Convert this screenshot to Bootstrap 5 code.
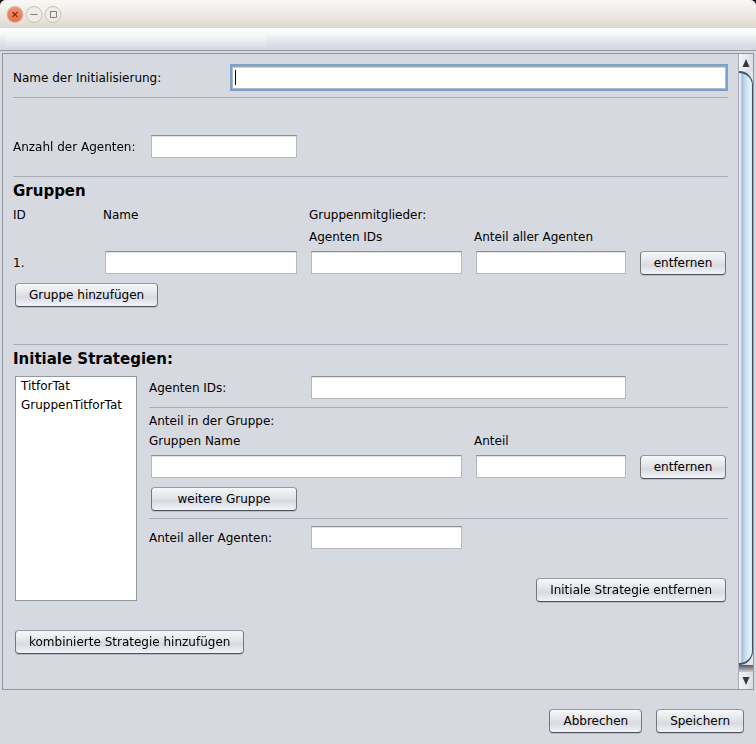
<!DOCTYPE html>
<html lang="de">
<head>
<meta charset="utf-8">
<meta name="viewport" content="width=device-width, initial-scale=1">
<title>Initialisierung</title>
<link href="https://cdn.jsdelivr.net/npm/bootstrap@5.3.0/dist/css/bootstrap.min.css" rel="stylesheet">
<style>
  html { background: #1c1414; }
  body { background: transparent; color: #000; font: 12px/16px "DejaVu Sans", sans-serif; }
  .app-window { background: #d6d9e0; border-radius: 6px 6px 0 0; overflow: hidden; }
  .title-bar { height: 28px; padding: 0 7px; gap: 3px; background: linear-gradient(#f9f7f5, #f2efeb 35%, #dfd8d1); }
  .win-btn { width: 16px; height: 16px; padding: 0; border: 0; background: none; line-height: 0; }
  .win-btn svg { display: block; overflow: visible; }
  .menu-strip { height: 23px; padding: 7px 5px 3px; background: linear-gradient(#fff, #f7f9fa 25%, #d9dce3 80%, #d6d9e0); border-bottom: 1px solid #9297a1; }
  .menu-slot { width: 261px; height: 12px; background: linear-gradient(#f8fafb, #dcdfe5); }
  .scroll-pane { margin: 2px 2px 0; border: 1px solid #9297a1; }
  .form-area { min-width: 0; padding: 12px 10px 35px; }
  .rule { height: 1px; margin: 0; border: 0; background: #a9aeb8; opacity: 1; }
  .section-title { margin: 0; padding-top: 5px; font-size: 15px; line-height: 19px; font-weight: 700; }
  .field { height: 23px; min-height: 0; border: 1px solid #b8b8ba; border-top-color: #8e8f91; border-radius: 0; padding: 0 4px; font-size: 12px; line-height: 16px; background: #fff; box-shadow: inset 0 1px 0 #e3e3e3; }
  .field:focus { border-color: #b8b8ba; border-top-color: #a8a8ab; outline: 2px solid #73a4d1; box-shadow: inset 0 1px 0 #d0d0d0; }
  .field:focus:placeholder-shown { caret-color: transparent; background: linear-gradient(#000, #000) 2px 3px / 1px 15px no-repeat #fff; }
  .metal-btn { height: 24px; padding: 0 13px; border: 1px solid #74777d; border-top-color: #96999f; border-bottom-color: #505359; border-radius: 4px; color: #000; font-size: 12px; line-height: 16px; white-space: nowrap; background: linear-gradient(#f8f8fa, #e4e6ea 40%, #d7dae1 60%, #f2f4fb); box-shadow: 0 1px 0 #b9bcc3; }
  .metal-btn:hover { color: #000; border-color: #505359; background: linear-gradient(#fff, #e9ebef 40%, #dfe2e8 60%, #fafbff); }
  .group-grid { display: grid; grid-template-columns: 80px minmax(0, 196fr) minmax(0, 155fr) minmax(0, 154fr) 90px; gap: 6px 10px; margin: 6px 0 8px; }
  .strategy-grid { display: grid; grid-template-columns: 126px minmax(0, 1fr); column-gap: 10px; margin: 7px 0 28px; }
  .share-grid { display: grid; grid-template-columns: minmax(0, 150fr) minmax(0, 155fr) minmax(0, 154fr) 90px; column-gap: 10px; }
  .cell { padding: 0 2px; min-width: 0; }
  .span-two { grid-column: span 2; }
  .span-three { grid-column: span 3; }
  .name-label { width: 217px; }
  .count-row { padding: 37px 0 18px; }
  .count-label { width: 138px; }
  .count-field { width: 146px; }
  .row-id { align-self: center; }
  .group-add { margin-bottom: 37px; }
  .share-head { margin: 5px 0 6px; row-gap: 4px; }
  .share-more { margin: 8px 0 7px; }
  .share-all { margin: 7px 0 29px; }
  .strategy-list { height: 225px; border: 1px solid #9297a1; border-radius: 0; padding: 0; background: #fff; font-size: 12px; overflow: hidden; }
  .strategy-list option { padding: 2px 5px 3px; color: #000; }
  .scroll-track { width: 15px; border-left: 1px solid #a7abb4; background: linear-gradient(90deg, #c9ccd3, #e8e9ec); }
  .scroll-btn { height: 17px; padding: 0; border: 0; background: linear-gradient(90deg, #f4f5f7, #dadde3); line-height: 0; }
  .scroll-thumb { border: 2px solid #3b566c; border-left: 0; border-right-width: 1px; border-radius: 0 14px 14px 0; background: linear-gradient(90deg, #e9f2fa 0 1px, #a9bfd5 3px, #c6daea 6px, #e0f3ff 11px, #d3eafa); }
  .scroll-shade { height: 7px; background: linear-gradient(#55585e, #c9ccd3); }
  .footer-bar { padding: 19px 12px 11px; gap: 14px; }
</style>
<script src="https://cdn.jsdelivr.net/npm/bootstrap@5.3.0/dist/js/bootstrap.bundle.min.js"></script>
</head>
<body>
<div class="app-window d-flex flex-column min-vh-100">
  <header class="title-bar d-flex align-items-center">
    <button class="win-btn" type="button" aria-label="Schließen"><svg width="16" height="16" viewBox="0 0 16 16"><defs><linearGradient id="red" x2="0" y2="1"><stop stop-color="#f7936f"/><stop offset="1" stop-color="#ee6f43"/></linearGradient></defs><circle cx="8" cy="8.5" r="8" fill="url(#red)" stroke="#cfc0b4"/><path d="M5.5 6l5 5m0-5l-5 5" stroke="#6b3a28" stroke-width="1.3"/></svg></button>
    <button class="win-btn" type="button" aria-label="Minimieren"><svg width="16" height="16" viewBox="0 0 16 16"><circle cx="8" cy="8.5" r="8" fill="#efebe6" stroke="#c8c1b8"/><path d="M4.5 8.5h7" stroke="#85807a"/></svg></button>
    <button class="win-btn" type="button" aria-label="Maximieren"><svg width="16" height="16" viewBox="0 0 16 16"><circle cx="8" cy="8.5" r="8" fill="#efebe6" stroke="#c8c1b8"/><path d="M5.5 5.5h6v6h-6z" fill="none" stroke="#85807a"/></svg></button>
  </header>
  <div class="menu-strip"><div class="menu-slot"></div></div>

  <main class="scroll-pane d-flex flex-grow-1">
    <form class="form-area flex-grow-1" id="init-form">
      <div class="d-flex align-items-center mb-2">
        <label class="name-label flex-shrink-0" for="init-name">Name der Initialisierung:</label>
        <div class="cell flex-grow-1"><input class="field form-control" id="init-name" type="text" placeholder=" " autofocus></div>
      </div>
      <hr class="rule">
      <div class="count-row d-flex align-items-center">
        <label class="count-label" for="agent-count">Anzahl der Agenten:</label>
        <input class="field form-control count-field" id="agent-count" type="text">
      </div>
      <hr class="rule">

      <h1 class="section-title">Gruppen</h1>
      <div class="group-grid">
        <span>ID</span>
        <label for="group-name">Name</label>
        <span class="span-three">Gruppenmitglieder:</span>
        <span class="span-two"></span>
        <label for="group-ids">Agenten IDs</label>
        <label class="span-two" for="group-share">Anteil aller Agenten</label>
        <span class="row-id">1.</span>
        <div class="cell"><input class="field form-control" id="group-name" type="text"></div>
        <div class="cell"><input class="field form-control" id="group-ids" type="text"></div>
        <div class="cell"><input class="field form-control" id="group-share" type="text"></div>
        <div class="cell d-grid"><button class="metal-btn btn px-0" type="button">entfernen</button></div>
      </div>
      <div class="cell group-add d-flex"><button class="metal-btn btn" type="button">Gruppe hinzufügen</button></div>
      <hr class="rule">

      <h2 class="section-title">Initiale Strategien:</h2>
      <div class="strategy-grid">
        <div class="cell">
          <select class="strategy-list w-100 d-block" size="12" aria-label="Strategien">
            <option>TitforTat</option>
            <option>GruppenTitforTat</option>
          </select>
        </div>
        <section>
          <div class="share-grid align-items-center mb-2">
            <label for="strategy-ids">Agenten IDs:</label>
            <div class="cell span-two"><input class="field form-control" id="strategy-ids" type="text"></div>
          </div>
          <hr class="rule">
          <div class="share-grid share-head">
            <span class="span-three">Anteil in der Gruppe:</span><span></span>
            <label class="span-two" for="share-group">Gruppen Name</label>
            <label for="share-part">Anteil</label>
          </div>
          <div class="share-grid">
            <div class="cell span-two"><input class="field form-control" id="share-group" type="text"></div>
            <div class="cell"><input class="field form-control" id="share-part" type="text"></div>
            <div class="cell d-grid"><button class="metal-btn btn px-0" type="button">entfernen</button></div>
          </div>
          <div class="share-grid share-more">
            <div class="cell d-grid"><button class="metal-btn btn px-0" type="button">weitere Gruppe</button></div>
          </div>
          <hr class="rule">
          <div class="share-grid share-all align-items-center">
            <label for="share-all">Anteil aller Agenten:</label>
            <div class="cell"><input class="field form-control" id="share-all" type="text"></div>
          </div>
          <div class="cell d-flex justify-content-end"><button class="metal-btn btn" type="button">Initiale Strategie entfernen</button></div>
        </section>
      </div>
      <div class="cell d-flex"><button class="metal-btn btn" type="button">kombinierte Strategie hinzufügen</button></div>
    </form>

    <div class="scroll-track d-flex flex-column flex-shrink-0">
      <button class="scroll-btn" type="button" aria-label="Nach oben"><svg width="8" height="8" viewBox="0 0 8 8"><path d="M4 0l3.5 8h-7z" fill="#35383d"/></svg></button>
      <div class="scroll-thumb flex-grow-1"></div>
      <div class="scroll-shade"></div>
      <button class="scroll-btn" type="button" aria-label="Nach unten"><svg width="8" height="8" viewBox="0 0 8 8"><path d="M4 8l3.5-8h-7z" fill="#35383d"/></svg></button>
    </div>
  </main>

  <footer class="footer-bar d-flex justify-content-end">
    <button class="metal-btn btn" type="button">Abbrechen</button>
    <button class="metal-btn btn" type="submit" form="init-form">Speichern</button>
  </footer>
</div>
</body>
</html>
